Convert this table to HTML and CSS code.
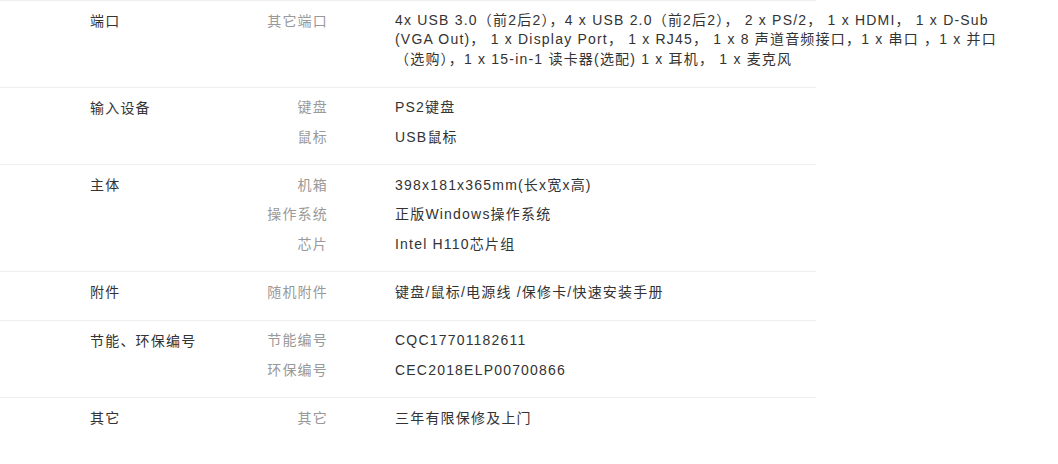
FILE: index.html
```html
<!DOCTYPE html>
<html>
<head>
	<meta charset="utf-8">
	<title>规格参数</title>
	<link rel="stylesheet" href="styles.css">
</head>
<body>

<div class="specTable">
	<div class="specRow">
		<div class="specGroup">端口</div>
		<div class="specItems">
			<div class="specItem">
				<div class="specLabel">其它端口</div>
				<div class="specValue specLong">4x USB 3.0（前2后2），4 x USB 2.0（前2后2）， 2 x PS/2， 1 x HDMI， 1 x D-Sub (VGA Out)， 1 x Display Port， 1 x RJ45， 1 x 8 声道音频接口，1 x 串口 ，1 x 并口（选购），1 x 15-in-1 读卡器(选配) 1 x 耳机， 1 x 麦克风</div>
			</div>
		</div>
	</div>
	<div class="specRow">
		<div class="specGroup">输入设备</div>
		<div class="specItems">
			<div class="specItem">
				<div class="specLabel">键盘</div>
				<div class="specValue">PS2键盘</div>
			</div>
			<div class="specItem">
				<div class="specLabel">鼠标</div>
				<div class="specValue">USB鼠标</div>
			</div>
		</div>
	</div>
	<div class="specRow">
		<div class="specGroup">主体</div>
		<div class="specItems">
			<div class="specItem">
				<div class="specLabel">机箱</div>
				<div class="specValue">398x181x365mm(长x宽x高)</div>
			</div>
			<div class="specItem">
				<div class="specLabel">操作系统</div>
				<div class="specValue">正版Windows操作系统</div>
			</div>
			<div class="specItem">
				<div class="specLabel">芯片</div>
				<div class="specValue">Intel H110芯片组</div>
			</div>
		</div>
	</div>
	<div class="specRow">
		<div class="specGroup">附件</div>
		<div class="specItems">
			<div class="specItem">
				<div class="specLabel">随机附件</div>
				<div class="specValue">键盘/鼠标/电源线 /保修卡/快速安装手册</div>
			</div>
		</div>
	</div>
	<div class="specRow">
		<div class="specGroup">节能、环保编号</div>
		<div class="specItems">
			<div class="specItem">
				<div class="specLabel">节能编号</div>
				<div class="specValue">CQC17701182611</div>
			</div>
			<div class="specItem">
				<div class="specLabel">环保编号</div>
				<div class="specValue">CEC2018ELP00700866</div>
			</div>
		</div>
	</div>
	<div class="specRow">
		<div class="specGroup">其它</div>
		<div class="specItems">
			<div class="specItem">
				<div class="specLabel">其它</div>
				<div class="specValue">三年有限保修及上门</div>
			</div>
		</div>
	</div>
</div>

</body>
</html>
```

FILE: styles.css
```css
body {
	margin: 0;
	background-color: #fff;
	font-family: "Liberation Sans", "Noto Sans CJK SC", sans-serif;
	font-size: 14px;
	letter-spacing: 1.2px;
	color: #333;
}
.specTable {
	width: 816px;
}
.specRow {
	display: flex;
	border-top: 1px solid #eee;
	padding: 5px 0 12.5px 0;
}
.specGroup {
	flex: 0 0 250px;
	box-sizing: border-box;
	padding: 5px 0 5px 90px;
	line-height: 20px;
	color: #333;
}
.specItems {
	flex: 1;
	min-width: 0;
}
.specItem {
	display: flex;
	padding: 4.75px 0;
	line-height: 20px;
}
.specLabel {
	flex: 0 0 78px;
	text-align: right;
	color: #999;
	white-space: nowrap;
}
.specValue {
	flex: 0 0 620px;
	margin-left: 67px;
	color: #333;
}
.specLong {
	line-height: 19.5px;
}
```
